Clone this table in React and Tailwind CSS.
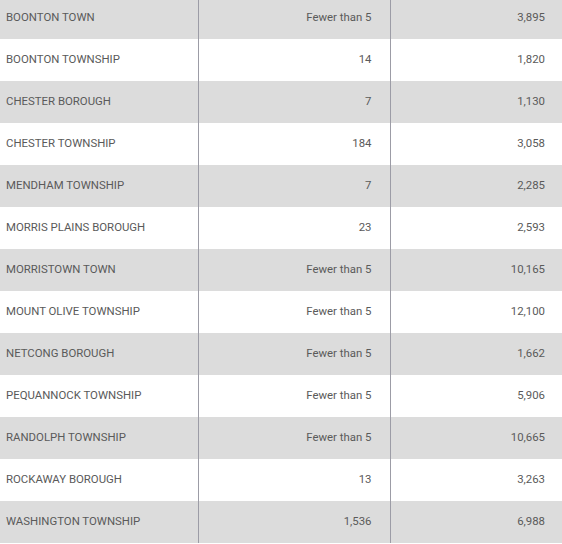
const rows = [
  ["BOONTON TOWN", "Fewer than 5", "3,895"],
  ["BOONTON TOWNSHIP", "14", "1,820"],
  ["CHESTER BOROUGH", "7", "1,130"],
  ["CHESTER TOWNSHIP", "184", "3,058"],
  ["MENDHAM TOWNSHIP", "7", "2,285"],
  ["MORRIS PLAINS BOROUGH", "23", "2,593"],
  ["MORRISTOWN TOWN", "Fewer than 5", "10,165"],
  ["MOUNT OLIVE TOWNSHIP", "Fewer than 5", "12,100"],
  ["NETCONG BOROUGH", "Fewer than 5", "1,662"],
  ["PEQUANNOCK TOWNSHIP", "Fewer than 5", "5,906"],
  ["RANDOLPH TOWNSHIP", "Fewer than 5", "10,665"],
  ["ROCKAWAY BOROUGH", "13", "3,263"],
  ["WASHINGTON TOWNSHIP", "1,536", "6,988"],
];

export default function App() {
  return (
    <div className="w-[562px] h-[544px] overflow-hidden bg-white font-['Roboto',sans-serif] text-[11.4px] text-[#5a5a5a]">
      <table className="-mt-[3px] w-full border-collapse table-fixed">
        <colgroup>
          <col className="w-[198px]" />
          <col className="w-[192px]" />
          <col />
        </colgroup>
        <tbody>
          {rows.map((r, i) => (
            <tr key={r[0]} className={i % 2 === 0 ? "h-[42px] bg-[#dcdcdc]" : "h-[42px] bg-white"}>
              <td className="pl-[6px] border-r border-[#9c9ca6]">{r[0]}</td>
              <td className="pr-[18px] text-right border-r border-[#9c9ca6]">{r[1]}</td>
              <td className="pr-[17px] text-right">{r[2]}</td>
            </tr>
          ))}
        </tbody>
      </table>
    </div>
  );
}
